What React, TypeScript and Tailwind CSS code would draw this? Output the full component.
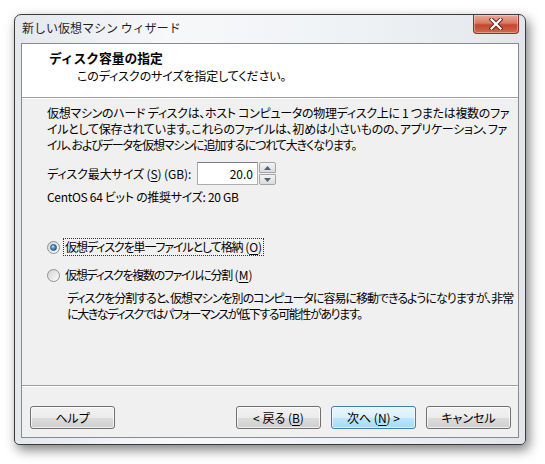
import React from 'react';

const jp = "font-['Noto_Sans_CJK_JP','Noto_Sans',sans-serif] [font-feature-settings:'palt'] text-[12px] text-black";

function U({ children }: { children: React.ReactNode }) {
  return <span className="underline underline-offset-[2px]">{children}</span>;
}

function Btn({ children, primary = false }: { children: React.ReactNode; primary?: boolean }) {
  return (
    <div
      className={
        primary
          ? 'w-[85px] h-[23px] rounded-[3px] border border-[#3c7fb1] bg-[linear-gradient(to_bottom,#eaf6fd_0%,#d9f0fc_50%,#bee6fd_50%,#a7d9f5_100%)] shadow-[inset_0_0_0_1px_rgba(255,255,255,0.6)] flex items-center justify-center leading-none'
          : 'w-[85px] h-[23px] rounded-[3px] border border-[#707070] bg-[linear-gradient(to_bottom,#f2f2f2_0%,#ebebeb_50%,#dddddd_50%,#cfcfcf_100%)] shadow-[inset_0_0_0_1px_rgba(255,255,255,0.7)] flex items-center justify-center leading-none'
      }
    >
      {children}
    </div>
  );
}

function Radio({ checked }: { checked?: boolean }) {
  return (
    <div className="w-[13px] h-[13px] rounded-full border border-[#8e8f8f] bg-[linear-gradient(135deg,#d4d4d4,#fdfdfd)] flex items-center justify-center shrink-0">
      {checked && (
        <div className="w-[7px] h-[7px] rounded-full bg-[radial-gradient(circle_at_35%_30%,#bfe0fa_0%,#4b91c9_45%,#174d7c_100%)] border border-[#1e5688]" />
      )}
    </div>
  );
}

function CloseButton() {
  return (
    <div className="w-[46px] h-[19px] rounded-b-[4px] border border-t-0 border-[#8b3125] bg-[linear-gradient(to_bottom,#e9a99b_0%,#d67a64_45%,#c4472f_55%,#cf6a4e_100%)] shadow-[inset_0_0_0_1px_rgba(255,255,255,0.35)] flex items-center justify-center">
      <svg width="14" height="12" viewBox="0 0 14 12">
        <path d="M2.5 1.5 L11.5 10.5 M11.5 1.5 L2.5 10.5" stroke="#5a1f15" strokeWidth="4" strokeLinecap="square" />
        <path d="M2.5 1.5 L11.5 10.5 M11.5 1.5 L2.5 10.5" stroke="#ffffff" strokeWidth="2.2" strokeLinecap="square" />
      </svg>
    </div>
  );
}

function Spinner() {
  return (
    <div className="flex flex-col w-[17px] h-[23px] ml-[1px]">
      <div className="h-[11px] border border-[#a6a6a6] rounded-t-[2px] bg-[linear-gradient(to_bottom,#f3f3f3,#dcdcdc)] flex items-center justify-center">
        <svg width="7" height="4" viewBox="0 0 7 4"><path d="M0 4 L3.5 0 L7 4 Z" fill="#4d6185" /></svg>
      </div>
      <div className="h-[11px] mt-[1px] border border-[#a6a6a6] rounded-b-[2px] bg-[linear-gradient(to_bottom,#f3f3f3,#dcdcdc)] flex items-center justify-center">
        <svg width="7" height="4" viewBox="0 0 7 4"><path d="M0 0 L7 0 L3.5 4 Z" fill="#4d6185" /></svg>
      </div>
    </div>
  );
}

export default function App() {
  return (
    <div className={`w-[545px] h-[464px] bg-white pt-[14px] pl-[14px] ${jp}`}>
      <div className="w-[512px] h-[431px] rounded-t-[7px] rounded-b-[5px] border border-[#3b3b3b] bg-[linear-gradient(to_right,#e4e8ec_0%,#f7f8fa_30%,#eef1f4_70%,#e2e6ea_100%)] shadow-[3px_5px_12px_rgba(0,0,0,0.5)] flex flex-col px-[6px] pb-[6px]">
        {/* title bar */}
        <div className="h-[28px] flex items-start justify-between shrink-0">
          <div className="pt-[5px] pl-[1px] leading-[16px] text-[#1e1e1e] [font-feature-settings:normal]">新しい仮想マシン ウィザード</div>
          <CloseButton />
        </div>

        {/* client */}
        <div className="flex-1 border border-[#8a8a8a] flex flex-col bg-[#f0f0f0]">
          {/* header */}
          <div className="h-[54px] bg-white pl-[27px] pt-[6px] leading-[16px] border-b border-[#a0a0a0]">
            <div className="font-bold text-[12.75px] [font-feature-settings:normal]">ディスク容量の指定</div>
            <div className="pl-[28px] mt-[2px] tracking-[-0.1px]">このディスクのサイズを指定してください。</div>
          </div>
          <div className="h-px bg-white" />

          {/* body */}
          <div className="h-[287px] pl-[25px] pt-[6px] leading-[16px] border-b border-[#a0a0a0]">
            <div className="whitespace-nowrap">
              <div className="tracking-[-0.3px]">
                仮想マシンのハード ディスクは、ホスト コンピュータの物理ディスク上に 1 つまたは複数のファ
              </div>
              <div className="tracking-[-0.3px]">
                イルとして保存されています。これらのファイルは、初めは小さいものの、アプリケーション、ファ
              </div>
              <div className="tracking-[-1.1px]">
                イル、およびデータを仮想マシンに追加するにつれて大きくなります。
              </div>
            </div>

            <div className="flex items-center mt-[9px]">
              <div className="w-[150px] tracking-[-0.1px]">
                ディスク最大サイズ (<U>S</U>) (GB):
              </div>
              <div className="w-[61px] h-[23px] bg-white border border-[#abadb3] border-t-[#7a7d85] flex items-center justify-end pr-[4px]">
                20.0
              </div>
              <Spinner />
            </div>

            <div className="mt-[4px] tracking-[-0.3px]">CentOS 64 ビット の推奨サイズ: 20 GB</div>

            <div className="flex items-center mt-[34px] h-[16px]">
              <Radio checked />
              <span className="ml-[3px] px-[1px] border border-dotted border-[#333] whitespace-nowrap">
                <span className="tracking-[-1.1px]">仮想ディスクを単一ファイルとして格納</span> (<U>O</U>)
              </span>
            </div>

            <div className="flex items-center mt-[12px] h-[16px]">
              <Radio />
              <span className="ml-[4px] px-[1px] whitespace-nowrap">
                <span className="tracking-[-1.3px]">仮想ディスクを複数のファイルに分割</span> (<U>M</U>)
              </span>
            </div>

            <div className="pl-[20px] mt-[7px] whitespace-nowrap">
              <div className="tracking-[-1px]">
                ディスクを分割すると、仮想マシンを別のコンピュータに容易に移動できるようになりますが、非常
              </div>
              <div className="tracking-[-1.4px]">
                に大きなディスクではパフォーマンスが低下する可能性があります。
              </div>
            </div>
          </div>
          <div className="h-px bg-white" />

          {/* buttons */}
          <div className="flex-1 flex items-start pt-[19px] pl-[8px] pr-[7px]">
            <Btn>ヘルプ</Btn>
            <div className="flex-1" />
            <div className="flex gap-[10px]">
              <Btn>
                &lt; 戻る (<U>B</U>)
              </Btn>
              <Btn primary>
                次へ (<U>N</U>) &gt;
              </Btn>
              <Btn>キャンセル</Btn>
            </div>
          </div>
        </div>
      </div>
    </div>
  );
}
